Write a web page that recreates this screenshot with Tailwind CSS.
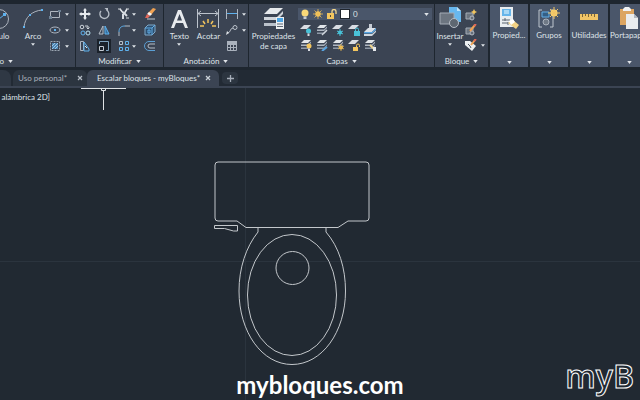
<!DOCTYPE html>
<html lang="es">
<head>
  <meta charset="UTF-8" />
  <meta name="viewport" content="width=device-width, initial-scale=1.0"/>
  <title>Escalar bloques - myBloques</title>
  <script src="https://cdn.jsdelivr.net/npm/@tailwindcss/browser@4"></script>
</head>
<body class="flex h-screen flex-col overflow-hidden bg-[#212932] font-['Lato',sans-serif] text-[8px] leading-[10px] text-[#dfe3e8]">

  <!-- Shared symbols -->
  <svg class="hidden">
    <symbol id="caret" viewBox="0 0 6 4"><path d="M0 0h6L3 4z" fill="#dfe3e8"/></symbol>
    <symbol id="layers" viewBox="0 0 12 12">
      <path d="M4 1h7L8 4H1z" fill="#e1e5e9"/><path d="M1 5.500h7l3-3v1.500L8 7H1z" fill="#aeb6c1"/><path d="M1 8.500h7l3-3V7l-3 3H1z" fill="#8f99a7"/>
    </symbol>
    <symbol id="sheet" viewBox="0 0 12 12"><path d="M4 1h7L7 5H0z" fill="#d9dde3"/></symbol>
  </svg>

  <!-- Ribbon -->
  <header class="flex h-[70px] shrink-0 bg-[#1e262f] pt-1 pb-[3px]">

    <section class="flex w-[75px] shrink-0 flex-col justify-between overflow-hidden bg-[#3b4453]">
      <div class="flex justify-end gap-2 pt-1 pr-1">
        <button class="flex w-8 shrink-0 flex-col items-center">
          <svg class="h-[22px] w-8 overflow-visible" viewBox="0 0 32 22" fill="none"><circle cx="18" cy="11" r="9.500" stroke="#aeb5bf"/><path d="M18 11l5-4" stroke="#5fb2ee"/><path d="M17 10h2v2h-2zM22 5h3v3h-3z" fill="#5fb2ee"/></svg>
          <span class="mt-px">Círculo</span>
        </button>
        <button class="flex w-6 shrink-0 flex-col items-center">
          <svg class="h-[22px] w-6 overflow-visible" viewBox="0 0 24 22" fill="none"><path d="M3 19C4 9 11 3 21 2" stroke="#aeb5bf"/><path d="M2 18h2v2H2zM8 6h2v2H8zM20 1h2v2h-2z" fill="#5fb2ee"/></svg>
          <span class="mt-px">Arco</span>
          <svg class="mt-[2px] h-[3px] w-1"><use href="#caret"/></svg>
        </button>
        <div class="-ml-1 grid shrink-0 grid-cols-[13px_6px] items-center gap-x-[3px] gap-y-1">
          <button aria-label="Rectángulo"><svg class="size-3" viewBox="0 0 12 12" fill="none"><path d="M1.500 3.500h9v6h-9z" stroke="#aeb5bf"/><path d="M0 8h3v3H0zM9 2h3v2H9z" fill="#6d8093"/></svg></button>
          <svg class="h-[3px] w-1"><use href="#caret"/></svg>
          <button aria-label="Elipse"><svg class="size-3" viewBox="0 0 12 12" fill="none"><ellipse cx="6" cy="6" rx="5" ry="3" stroke="#aeb5bf"/><path d="M5 5h2v2H5z" fill="#5fb2ee"/></svg></button>
          <svg class="h-[3px] w-1"><use href="#caret"/></svg>
          <button aria-label="Sombreado"><svg class="size-3" viewBox="0 0 12 12" fill="none"><path d="M1.500 1.500h9v9h-9z" stroke="#9aa4b1" stroke-dasharray="2 1"/><path d="M3 3h6v6H3z" fill="#4c86b4"/><path d="M3 6l3-3M3 9l6-6M6 9l3-3" stroke="#9fc4e2"/></svg></button>
          <svg class="h-[3px] w-1"><use href="#caret"/></svg>
        </div>
      </div>
      <button class="flex items-center justify-end gap-1 pr-[62px] pb-px"><span>Dibujo</span><svg class="h-[3px] w-[5px] shrink-0"><use href="#caret"/></svg></button>
    </section>

    <section class="ml-px flex w-[87px] shrink-0 flex-col justify-between bg-[#3b4453]">
      <div class="grid grid-cols-[19px_20px_14px_12px_12px] items-center justify-items-start gap-y-1 pt-1 pl-[3px]">
        <button aria-label="Desplazar"><svg class="size-3" viewBox="0 0 12 12"><path d="M6 0l2 2.500H7V5h2.500V4L12 6 9.500 8V7H7v2.500h1L6 12 4 9.500h1V7H2.500v1L0 6l2.500-2v1H5V2.500H4z" fill="#e6eaee"/></svg></button>
        <button aria-label="Girar"><svg class="size-3" viewBox="0 0 12 12" fill="none"><path d="M8.500 2A4.500 4.500 0 1 1 3 3" stroke="#b9c0c9" stroke-width="1.300"/><path d="M6.500 0H10v3.500z" fill="#b9c0c9"/></svg></button>
        <button aria-label="Recortar"><svg class="size-3" viewBox="0 0 12 12" fill="none"><path d="M2 1l4 5M9 1L6 6" stroke="#e3e7eb" stroke-width="1.500"/><path d="M5 4l4 4M5 6v5" stroke="#d5dae0" stroke-width="2"/><path d="M8 10h3M0 1h3M8 1h3" stroke="#d3d8de"/></svg></button>
        <svg class="h-[3px] w-1"><use href="#caret"/></svg>
        <button aria-label="Borrar"><svg class="size-3" viewBox="0 0 12 12"><path d="M9 0l3 1-5 6-3-2z" fill="#f0a253"/><path d="M5 4l3 2-2 2-3-2z" fill="#f5f6f7"/><path d="M3 6l3 2-2 2H1z" fill="#e0685a"/><path d="M3 11h8" stroke="#c2c9d1"/></svg></button>

        <button aria-label="Copiar"><svg class="size-3" viewBox="0 0 12 12" fill="none"><circle cx="3" cy="3" r="1.800" stroke="#cfd5dc"/><path d="M6 2h3v3M7.500 3.500L9 5l1.500-1.500" stroke="#cfd5dc"/><circle cx="4" cy="9" r="2" stroke="#5fb2ee"/><circle cx="9" cy="9" r="2" stroke="#b8e0ef"/></svg></button>
        <button aria-label="Simetría"><svg class="size-3" viewBox="0 0 12 12" fill="none"><path d="M5 2v8H1z" stroke="#b6bec8"/><path d="M7 2v8h4z" fill="#376f9e" stroke="#5fb2ee"/></svg></button>
        <button aria-label="Empalme"><svg class="size-3" viewBox="0 0 12 12" fill="none"><path d="M1 12V8" stroke="#b6bec8"/><path d="M1 8c0-4 2-6 6-6" stroke="#5fb2ee"/><path d="M7 2h5" stroke="#b6bec8"/></svg></button>
        <svg class="h-[3px] w-1"><use href="#caret"/></svg>
        <button aria-label="Descomponer"><svg class="size-3" viewBox="0 0 12 12" fill="none"><path d="M1 4l3-3h7v7l-3 3H1z" fill="#2c4f70" stroke="#7fa9cb"/><path d="M1 4h7v7M8 4l3-3M4 6h2v3H4z" stroke="#63aee6"/></svg></button>

        <button aria-label="Estirar"><svg class="size-3" viewBox="0 0 12 12" fill="none"><path d="M1.500 1.500h3v9h-3z" stroke="#aeb6c0"/><path d="M5 2l5 7v2H5z" stroke="#5fb2ee"/><path d="M6 6l2 2" stroke="#dfe4e8"/></svg></button>
        <button class="bg-[#1b222b] outline outline-[#1b222b]" aria-label="Escala"><svg class="size-3" viewBox="0 0 12 12" fill="none"><path d="M1.500 6.500h4v4h-4z" stroke="#c4cad2"/><path d="M1.500 4V1.500h9v9H8" stroke="#7fa3bf"/></svg></button>
        <button aria-label="Matriz"><svg class="size-3" viewBox="0 0 12 12" fill="none" stroke="#5fb2ee"><path d="M1.500 1.500h3v3h-3z" stroke="#b6bec8"/><path d="M7.500 1.500h3v3h-3zM1.500 7.500h3v3h-3zM7.500 7.500h3v3h-3z"/></svg></button>
        <svg class="h-[3px] w-1"><use href="#caret"/></svg>
        <button aria-label="Desfase"><svg class="size-3" viewBox="0 0 12 12" fill="none"><path d="M11 1.500H5a4.500 4.500 0 0 0 0 9h6" stroke="#5b9fd4"/><path d="M11 4H6a2 2 0 0 0 0 4h5" stroke="#b6bec8"/></svg></button>
      </div>
      <button class="flex items-center justify-center gap-1 pb-px"><span>Modificar</span><svg class="h-[3px] w-[5px]"><use href="#caret"/></svg></button>
    </section>

    <section class="ml-px flex w-[84px] shrink-0 flex-col justify-between bg-[#3b4453]">
      <div class="flex gap-1 pt-1">
        <button class="flex w-8 flex-col items-center">
          <svg class="h-[22px] w-6" viewBox="0 0 24 22"><path d="M4 20L11 2h3l7 18h-3l-2-5H9l-2 5zM10 12.500h5L12.500 6z" fill="#e8ebee" fill-rule="evenodd"/></svg>
          <span class="mt-px">Texto</span>
          <svg class="mt-[2px] h-[3px] w-1"><use href="#caret"/></svg>
        </button>
        <button class="-ml-1 flex w-7 flex-col items-center">
          <svg class="h-[22px] w-[22px]" viewBox="0 0 22 22" fill="none"><path d="M.5 1v19M21.500 1v19M1 5.500h20M4 3L1 5.500 4 8M18 3l3 2.500L18 8" stroke="#bcc3cc"/><path d="M11 11v4M6 13l2 3M16 13l-2 3M3 18h4M15 18h4" stroke="#f2c45c" stroke-width="1.500"/></svg>
          <span class="mt-px">Acotar</span>
        </button>
        <div class="grid grid-cols-[12px_6px] items-center gap-x-1 gap-y-1 self-start">
          <button aria-label="Lineal"><svg class="size-3" viewBox="0 0 12 12" fill="none"><path d="M.5 1v10M11.500 1v10" stroke="#aeb6c0"/><path d="M1 5.500h10" stroke="#5fb2ee"/></svg></button>
          <svg class="h-[3px] w-1"><use href="#caret"/></svg>
          <button aria-label="Directriz"><svg class="size-3" viewBox="0 0 12 12" fill="none"><circle cx="9" cy="3.500" r="2" stroke="#bcc3cc"/><path d="M7 4C4 4 5 8 2 9" stroke="#bcc3cc"/><path d="M0 11l1-4 2 2z" fill="#dfe3e7"/></svg></button>
          <svg class="h-[3px] w-1"><use href="#caret"/></svg>
          <button aria-label="Tabla"><svg class="size-3" viewBox="0 0 12 12" fill="none"><path d="M1 1h10v3H1z" fill="#aab2bd"/><path d="M1.500 1.500h9v9h-9zM1 4.500h10M1 7.500h10M4.500 4v7M7.500 4v7" stroke="#aab2bd"/></svg></button>
        </div>
      </div>
      <button class="flex items-center justify-center gap-1 pb-px"><span>Anotación</span><svg class="h-[3px] w-[5px]"><use href="#caret"/></svg></button>
    </section>

    <section class="ml-px flex w-[185px] shrink-0 flex-col justify-between bg-[#3b4453]">
      <div class="flex pt-1">
        <button class="flex w-[49px] flex-col items-center">
          <svg class="h-[22px] w-6" viewBox="0 0 24 22"><path d="M8 0h13l-6 6H2z" fill="#e6e9ec"/><path d="M2 9h13l6-6v3l-6 6H2z" fill="#d0d5db"/><path d="M2 15h13l6-6v3l-6 6H2z" fill="#bac2cb"/><path d="M14 9h8v12h-8z" fill="#edf0f2"/><path d="M15 10h6v4h-6z" fill="#4ea6e4"/><path d="M15 16h6M15 18.500h6" stroke="#5d6774"/></svg>
          <span class="mt-px">Propiedades<br>de capa</span>
        </button>
        <div class="flex flex-col">
          <div class="flex h-3 w-[134px] items-center gap-1 bg-[#4a566a] px-[3px]">
            <svg class="h-[10px] w-2" viewBox="0 0 8 10"><circle cx="4" cy="4" r="3.500" fill="#f8d878"/><path d="M2.500 7.500h3V10h-3z" fill="#c6ccd3"/></svg>
            <svg class="size-[10px]" viewBox="0 0 10 10"><circle cx="5" cy="5" r="2.700" fill="#f6c95f"/><path d="M5 0v10M0 5h10M1.500 1.500l7 7M8.500 1.500l-7 7" stroke="#eebc55" stroke-width=".8"/></svg>
            <svg class="h-[10px] w-[10px]" viewBox="0 0 10 10" fill="none"><path d="M0 4h7v6H0z" fill="#f3c65f"/><path d="M5 4V2.500a2 2 0 0 1 4 0V5" stroke="#f3d78d" stroke-width="1.300"/><path d="M3 6h1v2H3z" fill="#554b34"/></svg>
            <span class="size-2 bg-white outline outline-[#20262e]"></span>
            <select class="min-w-0 grow appearance-none bg-transparent" aria-label="Capa actual"><option>0</option></select>
            <svg class="h-[3px] w-[5px]"><use href="#caret"/></svg>
          </div>
          <div class="grid grid-cols-5 gap-x-1 gap-y-[3px] self-start pt-1 pl-[2px]">
            <button aria-label="Desactivar"><svg class="size-3" viewBox="0 0 12 12"><use href="#sheet"/><circle cx="8.500" cy="7" r="2.500" fill="#49c2d8"/><path d="M7.500 9.500h2V12h-2z" fill="#d9dde3"/></svg></button>
            <button aria-label="Aislar"><svg class="size-3" viewBox="0 0 12 12"><use href="#layers"/><path d="M6 11l5-5" stroke="#cfd5dc" stroke-width="1.500"/></svg></button>
            <button aria-label="Inutilizar"><svg class="size-3" viewBox="0 0 12 12"><use href="#sheet"/><circle cx="8" cy="8.500" r="2" fill="#49c2d8"/><path d="M8 5v7M5 7l6 3M11 7l-6 3" stroke="#49c2d8"/></svg></button>
            <button aria-label="Bloquear"><svg class="size-3" viewBox="0 0 12 12" fill="none"><use href="#sheet"/><path d="M6 7h6v5H6z" fill="#49c2d8"/><path d="M7.500 7V5.500a1.500 1.500 0 0 1 3 0V7" stroke="#49c2d8"/></svg></button>
            <button aria-label="Definir actual"><svg class="size-3" viewBox="0 0 12 12"><path d="M4 4h8L8 8H0z" fill="#dce2e8"/><path d="M0 8h8l4-4v2L8 9.500H0z" fill="#58a5e2"/><path d="M0 10h8l4-3.500V8l-4 4H0z" fill="#d0d7de"/><path d="M5 0h3v4H5z" fill="#c7cdd5"/></svg></button>
            <button aria-label="Activar todas"><svg class="size-3" viewBox="0 0 12 12"><use href="#layers"/><circle cx="9" cy="7" r="2.500" fill="#f3c65f"/><path d="M8 9.500h2V12H8z" fill="#d9dde3"/></svg></button>
            <button aria-label="Dejar de aislar"><svg class="size-3" viewBox="0 0 12 12"><use href="#layers"/><path d="M6 12l5-4" stroke="#58a5e2" stroke-width="2"/></svg></button>
            <button aria-label="Reutilizar todas"><svg class="size-3" viewBox="0 0 12 12"><use href="#layers"/><circle cx="9" cy="8.500" r="2" fill="#f3c65f"/><path d="M9 5v7M6 7l6 3M12 7l-6 3" stroke="#e9b750" stroke-width=".8"/></svg></button>
            <button aria-label="Desbloquear"><svg class="size-3" viewBox="0 0 12 12" fill="none"><use href="#sheet"/><path d="M5 8h5v4H5z" fill="#f3c65f"/><path d="M8.500 8V6.500a1.500 1.500 0 0 1 3 0V8" stroke="#f3c65f"/></svg></button>
            <button aria-label="Igualar capa"><svg class="size-3" viewBox="0 0 12 12"><use href="#layers"/><path d="M6 6l5 5" stroke="#f0d68f" stroke-width="2"/><path d="M9 8h3v4H9z" fill="#e6e9ec"/></svg></button>
          </div>
        </div>
      </div>
      <button class="flex items-center justify-center gap-1 pb-px"><span>Capas</span><svg class="h-[3px] w-[5px]"><use href="#caret"/></svg></button>
    </section>

    <section class="ml-px flex w-[53px] shrink-0 flex-col justify-between bg-[#3b4453]">
      <div class="flex pt-[2px]">
        <button class="flex w-[30px] flex-col items-center">
          <svg class="h-6 w-[22px]" viewBox="0 0 22 24" fill="none"><path d="M10 1h8l4 4v11H10z" fill="#68b8ef"/><path d="M18 1v4h4z" fill="#c1e3f8"/><path d="M1 7h14v11H1z" fill="#6c7580" stroke="#a4acb6"/><circle cx="15" cy="17" r="4.500" fill="#5e6771" stroke="#b6bdc6"/></svg>
          <span class="mt-px">Insertar</span>
          <svg class="mt-[2px] h-[3px] w-1"><use href="#caret"/></svg>
        </button>
        <div class="grid grid-cols-[12px_4px] items-center gap-x-1 gap-y-[3px] self-start pt-[3px]">
          <button aria-label="Crear bloque"><svg class="size-3" viewBox="0 0 12 12" fill="none"><path d="M1 4h7v6H1z" fill="#6c7580" stroke="#a4acb6"/><circle cx="7" cy="9" r="2" fill="#666f7a" stroke="#b3bac3"/><path d="M9 0l1 2 2 1-2 1-1 2-1-2-2-1 2-1z" fill="#f3c65f"/></svg></button>
          <span></span>
          <button aria-label="Editar bloque"><svg class="size-3" viewBox="0 0 12 12" fill="none"><path d="M1 4h7v6H1z" fill="#6c7580" stroke="#a4acb6"/><circle cx="7" cy="9" r="2" fill="#666f7a" stroke="#b3bac3"/><path d="M5 7l5-6" stroke="#f0a253" stroke-width="2"/><path d="M9 2l2-2" stroke="#e0685a" stroke-width="2"/></svg></button>
          <span></span>
          <button aria-label="Editar atributos"><svg class="size-3" viewBox="0 0 12 12" fill="none"><path d="M0 2h5l6 5-4 5-7-6z" fill="#eceff1"/><path d="M3 5l2 2 1 2" stroke="#4a535f"/><path d="M6 6l4-5" stroke="#f0a253" stroke-width="2"/><path d="M9 2l2-2" stroke="#e0685a" stroke-width="2"/></svg></button>
          <svg class="h-[3px] w-1"><use href="#caret"/></svg>
        </div>
      </div>
      <button class="flex items-center justify-center gap-1 pb-px"><span>Bloque</span><svg class="h-[3px] w-[5px]"><use href="#caret"/></svg></button>
    </section>

    <!-- Collapsed panels -->
    <div class="flex gap-[2px] pl-[2px]">
      <button class="flex w-[38px] flex-col items-center bg-[#4a566a] pt-[2px] pb-[3px]">
        <svg class="h-6 w-5 shrink-0" viewBox="0 0 20 24"><path d="M1 1h13v20H1z" fill="#e8edf0"/><path d="M3 3h9v7H3z" fill="#66b5ea"/><path d="M5 4h5v4H5z" fill="#a8d8f5"/><path d="M3 14h8M3 17h6M6 12v3M9 16v3" stroke="#5b6570"/><path d="M9 17l5-3 6 5-3 4z" fill="#f2d184"/><path d="M10 15l4-2 2 3-4 3z" fill="#fff"/></svg>
        <span>Propied...</span>
        <svg class="mt-auto h-[3px] w-[5px]"><use href="#caret"/></svg>
      </button>
      <button class="flex w-[38px] flex-col items-center bg-[#4a566a] pt-[2px] pb-[3px]">
        <svg class="h-6 w-[22px] shrink-0" viewBox="0 0 22 24" fill="none"><path d="M4 4H1v17h3M12 4h3v17h-3" stroke="#bdc5ce"/><path d="M4 6h7v5H4z" fill="#345f86" stroke="#62aee6"/><circle cx="8" cy="16" r="3" fill="#6f7986" stroke="#aab2bd"/><circle cx="16" cy="7" r="3.500" fill="#f8d06c"/><path d="M16 1v12M10 7h12M12 3l8 8M20 3l-8 8" stroke="#f0c366"/></svg>
        <span>Grupos</span>
        <svg class="mt-auto h-[3px] w-[5px]"><use href="#caret"/></svg>
      </button>
      <button class="flex w-[38px] flex-col items-center bg-[#4a566a] pt-[2px] pb-[3px]">
        <svg class="h-6 w-5 shrink-0" viewBox="0 0 20 24"><path d="M1 8h18v6H1z" fill="#f2c566"/><path d="M3.500 8v3M6.500 8v2M9.500 8v3M12.500 8v2M15.500 8v3" stroke="#7b6538"/></svg>
        <span>Utilidades</span>
        <svg class="mt-auto h-[3px] w-[5px]"><use href="#caret"/></svg>
      </button>
      <button class="flex w-[38px] flex-col items-center bg-[#4a566a] pt-[2px] pb-[3px]">
        <svg class="h-6 w-5 shrink-0" viewBox="0 0 20 24"><path d="M1 3h14v16H1z" fill="#dca561"/><path d="M4 3l2-2h4l2 2v2H4z" fill="#eff1f3"/><path d="M7 8h8l4 4v11H7z" fill="#e9ecee"/><path d="M15 8v4h4z" fill="#aeb6bf"/></svg>
        <span class="self-start">Portapap</span>
        <svg class="mt-auto h-[3px] w-[5px]"><use href="#caret"/></svg>
      </button>
    </div>
  </header>

  <!-- Drawing tabs -->
  <nav class="flex h-[18px] shrink-0 items-stretch border-b-2 border-[#3b4453] bg-[#222a34] whitespace-nowrap">
    <span class="w-[11px] rounded-tr-lg bg-[#2f3844]"></span>
    <div class="ml-[2px] flex w-[74px] items-center justify-between rounded-t-md bg-[#2c3540] pr-1 pl-[5px] text-[#a9b0ba]">
      <a href="#">Uso personal*</a>
      <button aria-label="Cerrar Uso personal"><svg class="size-[6px]" viewBox="0 0 6 6"><path d="M1 1l4 4M5 1L1 5" stroke="#b5bcc5" stroke-width="1.200"/></svg></button>
    </div>
    <div class="flex w-[132px] items-center justify-between rounded-t-md bg-[#3b4453] pr-2 pl-[10px]">
      <a href="#">Escalar bloques - myBloques*</a>
      <button aria-label="Cerrar Escalar bloques"><svg class="size-[6px]" viewBox="0 0 6 6"><path d="M1 1l4 4M5 1L1 5" stroke="#ccd2d9" stroke-width="1.200"/></svg></button>
    </div>
    <button class="my-[2px] ml-[3px] flex w-4 items-center justify-center rounded bg-[#2c3540]" aria-label="Nuevo dibujo"><svg class="size-[7px]" viewBox="0 0 7 7"><path d="M3.500 0v7M0 3.500h7" stroke="#a6aeb9" stroke-width="1.300"/></svg></button>
  </nav>

  <!-- Model space -->
  <main class="relative flex grow flex-col overflow-hidden pb-[2px]">
    <svg class="absolute inset-0 size-full" viewBox="0 88 640 312" fill="none">
      <path d="M245.500 88v312M0 261.500h640" stroke="#2b343e"/>
      <g stroke="#c3c7cb">
        <path d="M218 162h148q3 0 3 3v53q0 3-3 3h-18l-10 6.500h-92l-9-6.500h-19q-3 0-3-3v-53q0-3 3-3z"/>
        <path d="M214.500 225.500h23v5.500h-4l-9-2.500h-10z"/>
        <path d="M258 227.500v4.500C246 247 239 268 239 291C239 332 262 364.500 292 364.500S345.500 332 345.500 291C345.500 268 339 247 326 232v-4.500"/>
        <ellipse cx="292" cy="295" rx="44.500" ry="60.500"/>
        <circle cx="292.500" cy="268" r="16.500"/>
      </g>
      <path d="M81 88.500h45M103.500 91v19M101.500 88v2.500h4v-2.500" stroke="#dfe2e5"/>
    </svg>
    <p class="relative flex w-[50px] justify-end pt-1 whitespace-nowrap">[–][Superior][Estructura alámbrica 2D]</p>
    <p class="relative mt-auto text-center text-[24px] leading-[26px] font-bold text-white">mybloques.com</p>
    <p class="absolute right-[6px] bottom-1 font-['Open_Sans',sans-serif] text-[32px] leading-[40px] font-semibold text-[#212932] [-webkit-text-stroke:1px_white]">myB</p>
  </main>

</body>
</html>
